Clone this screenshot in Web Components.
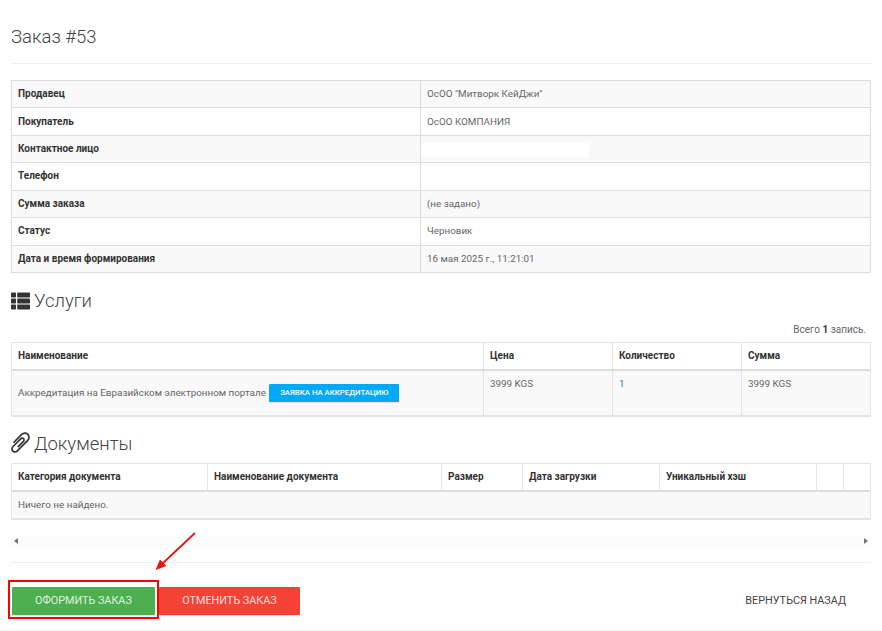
<!DOCTYPE html>
<html lang="ru">
<head>
<meta charset="utf-8">
<title>Заказ #53</title>
<style>
    html, body { margin: 0; background: #fff; }
    body { font: 9.85px Roboto, sans-serif; color: #666; }
</style>
</head>
<body>

<order-page>
    <page-title>Заказ #53</page-title>

    <detail-table>
        <detail-row label="Продавец">ОсОО "Митворк КейДжи"</detail-row>
        <detail-row label="Покупатель">ОсОО КОМПАНИЯ</detail-row>
        <detail-row label="Контактное лицо" hidden-value></detail-row>
        <detail-row label="Телефон"></detail-row>
        <detail-row label="Сумма заказа">(не задано)</detail-row>
        <detail-row label="Статус">Черновик</detail-row>
        <detail-row label="Дата и время формирования">16 мая 2025 г., 11:21:01</detail-row>
    </detail-table>

    <section-heading icon="list" style="--top: 16px; --bottom: 0">Услуги</section-heading>
    <grid-summary>Всего <b>1</b> запись.</grid-summary>
    <data-grid style="--cols: 471px 129px 129px 1fr">
        <grid-row head>
            <grid-cell>Наименование</grid-cell>
            <grid-cell>Цена</grid-cell>
            <grid-cell>Количество</grid-cell>
            <grid-cell>Сумма</grid-cell>
        </grid-row>
        <grid-row style="--row: 44px">
            <grid-cell middle>Аккредитация на Евразийском электронном портале <small-button>Заявка на аккредитацию</small-button></grid-cell>
            <grid-cell>3999 KGS</grid-cell>
            <grid-cell link>1</grid-cell>
            <grid-cell>3999 KGS</grid-cell>
        </grid-row>
    </data-grid>

    <section-heading icon="clip" style="--top: 15px; --bottom: 7px">Документы</section-heading>
    <data-grid style="--cols: 195px 234px 81px 137px 157px 27px 1fr">
        <grid-row head>
            <grid-cell>Категория документа</grid-cell>
            <grid-cell>Наименование документа</grid-cell>
            <grid-cell>Размер</grid-cell>
            <grid-cell>Дата загрузки</grid-cell>
            <grid-cell>Уникальный хэш</grid-cell>
            <grid-cell></grid-cell>
            <grid-cell></grid-cell>
        </grid-row>
        <grid-row style="--cols: 1fr">
            <grid-cell>Ничего не найдено.</grid-cell>
        </grid-row>
    </data-grid>

    <scroll-track></scroll-track>

    <action-bar>
        <action-button color="green" style="--pad: 23px">Оформить заказ</action-button>
        <action-button color="red" style="--pad: 23.5px">Отменить заказ</action-button>
        <action-button slot="end" style="margin-right: 1px">Вернуться назад</action-button>
    </action-bar>

    <call-out></call-out>
</order-page>

<script>
class OrderPage extends HTMLElement {
    constructor() {
        super()
        this.attachShadow({ mode: 'open' })
        this.shadowRoot.innerHTML = `
        <style>
            :host {
                display: block;
                position: relative;
                box-sizing: border-box;
                height: 631px;
                padding: 0 11px 0 11px;
                overflow: hidden;
                border-bottom: 1px solid #f2f2f2;
            }
        </style>
        <slot></slot>
        `
    }
}

class PageTitle extends HTMLElement {
    constructor() {
        super()
        this.attachShadow({ mode: 'open' })
        this.shadowRoot.innerHTML = `
        <style>
            :host {
                display: block;
                height: 64px;
                box-sizing: border-box;
                padding-top: 26px;
                border-bottom: 1px solid #eee;
                margin-bottom: 16px;
                font: 300 18.5px/22px Roboto, sans-serif;
                color: #444;
            }
        </style>
        <slot></slot>
        `
    }
}

class DetailTable extends HTMLElement {
    constructor() {
        super()
        this.attachShadow({ mode: 'open' })
        this.shadowRoot.innerHTML = `
        <style>
            :host {
                display: block;
                border: 1px solid #ddd;
                border-bottom: 0;
            }
        </style>
        <slot></slot>
        `
    }
}

class DetailRow extends HTMLElement {
    constructor() {
        super()
        this.attachShadow({ mode: 'open' })
        const label = this.getAttribute('label')
        const patch = this.hasAttribute('hidden-value') ? '<span class="patch"></span>' : ''
        this.shadowRoot.innerHTML = `
        <style>
            :host {
                display: grid;
                grid-template-columns: 408px 1fr;
                height: 27.43px;
                box-sizing: border-box;
                border-bottom: 1px solid #ddd;
            }
            :host(:nth-child(odd)) { background: #f9f9f9; }
            .label, .value {
                display: flex;
                align-items: center;
                padding: 0 6px 1px;
            }
            .label { font-weight: 700; font-size: 10px; color: #333; }
            .value { border-left: 1px solid #ddd; color: #666; position: relative; }
            .patch {
                position: absolute;
                left: 0;
                top: 7px;
                width: 168px;
                height: 15px;
                background: #fff;
            }
        </style>
        <div class="label">${label}</div>
        <div class="value">${patch}<slot></slot></div>
        `
    }
}

class SectionHeading extends HTMLElement {
    constructor() {
        super()
        this.attachShadow({ mode: 'open' })
        const icons = {
            list: `<svg width="19" height="18" viewBox="0 0 19 18" fill="#333">
                <rect x="0" y="0.5" width="5" height="5" rx="0.8"/><rect x="6.2" y="0.5" width="12.8" height="5" rx="0.8"/>
                <rect x="0" y="6.5" width="5" height="5" rx="0.8"/><rect x="6.2" y="6.5" width="12.8" height="5" rx="0.8"/>
                <rect x="0" y="12.5" width="5" height="5" rx="0.8"/><rect x="6.2" y="12.5" width="12.8" height="5" rx="0.8"/>
            </svg>`,
            clip: `<svg width="19" height="24" viewBox="0 0 1408 1792" fill="#333" style="transform: translateY(-1.5px) scaleX(-1)"><path d="M1404 1385q0 117-79 196t-196 79q-135 0-235-100l-777-776q-113-115-113-271 0-159 110-270t269-111q158 0 273 113l605 606q10 10 10 22 0 16-30.5 46.5t-46.5 30.5q-13 0-23-10l-606-607q-79-77-181-77-106 0-179 75t-73 181q0 105 76 181l776 777q63 63 145 63 64 0 106-42t42-106q0-82-63-145l-581-581q-26-24-60-24-29 0-48 19t-19 48q0 32 25 59l410 410q10 10 10 22 0 16-31 47t-47 31q-12 0-22-10l-410-410q-63-61-63-149 0-82 57-139t139-57q88 0 149 63l581 581q100 98 100 235z"/></svg>`
        }
        this.shadowRoot.innerHTML = `
        <style>
            :host {
                display: flex;
                align-items: center;
                gap: 4px;
                height: 24px;
                margin-top: var(--top, 16px);
                margin-bottom: var(--bottom, 0);
                font: 300 18.5px/24px Roboto, sans-serif;
                color: #444;
            }
            svg { flex: none; display: block; }
        </style>
        ${icons[this.getAttribute('icon')] || ''}
        <span><slot></slot></span>
        `
    }
}

class GridSummary extends HTMLElement {
    constructor() {
        super()
        this.attachShadow({ mode: 'open' })
        this.shadowRoot.innerHTML = `
        <style>
            :host {
                display: block;
                margin-top: 10px;
                height: 19px;
                padding-right: 5px;
                text-align: right;
                font-size: 10px;
                line-height: 14px;
                color: #666;
            }
            ::slotted(b) { color: #333; }
        </style>
        <slot></slot>
        `
    }
}

class DataGrid extends HTMLElement {
    constructor() {
        super()
        this.attachShadow({ mode: 'open' })
        this.shadowRoot.innerHTML = `
        <style>
            :host {
                display: block;
                border: 1px solid #e4e4e4;
                border-bottom-width: 2px;
            }
        </style>
        <slot></slot>
        `
    }
}

class GridRow extends HTMLElement {
    constructor() {
        super()
        this.attachShadow({ mode: 'open' })
        this.shadowRoot.innerHTML = `
        <style>
            :host {
                display: grid;
                grid-template-columns: var(--cols);
                min-height: var(--row, 26px);
                background: #f9f9f9;
            }
            :host([head]) {
                background: #fff;
                font-weight: 700;
                font-size: 10px;
                color: #333;
                border-bottom: 2px solid #ddd;
            }
        </style>
        <slot></slot>
        `
    }
}

class GridCell extends HTMLElement {
    constructor() {
        super()
        this.attachShadow({ mode: 'open' })
        this.shadowRoot.innerHTML = `
        <style>
            :host {
                display: block;
                box-sizing: border-box;
                padding: 6px;
                line-height: 14px;
                border-left: 1px solid #e4e4e4;
            }
            :host(:first-child) { border-left: 0; }
            :host([middle]) { padding-top: 13px; }
            :host([link]) { color: #3c7a9c; }
        </style>
        <slot></slot>
        `
    }
}

class SmallButton extends HTMLElement {
    constructor() {
        super()
        this.attachShadow({ mode: 'open' })
        this.shadowRoot.innerHTML = `
        <style>
            :host {
                display: inline-block;
                vertical-align: middle;
                box-sizing: border-box;
                height: 18px;
                width: 130px;
                margin-left: 1px;
                background: #03a9f4;
                border-radius: 1px;
                color: #fff;
                font-size: 7.8px;
                font-weight: 500;
                line-height: 18px;
                text-align: center;
                text-transform: uppercase;
                box-shadow: 0 1px 1px rgba(0,0,0,.1);
            }
        </style>
        <slot></slot>
        `
    }
}

class ScrollTrack extends HTMLElement {
    constructor() {
        super()
        this.attachShadow({ mode: 'open' })
        this.shadowRoot.innerHTML = `
        <style>
            :host {
                display: flex;
                justify-content: space-between;
                align-items: center;
                height: 11px;
                margin-top: 16px;
                padding: 0 3px;
                background: #fcfcfc;
            }
            i { width: 0; height: 0; border: 3.5px solid transparent; }
            .l { border-left: 0; border-right: 4px solid #757575; }
            .r { border-right: 0; border-left: 4px solid #757575; }
        </style>
        <i class="l"></i><i class="r"></i>
        `
    }
}

class ActionBar extends HTMLElement {
    constructor() {
        super()
        this.attachShadow({ mode: 'open' })
        this.shadowRoot.innerHTML = `
        <style>
            :host {
                display: flex;
                justify-content: space-between;
                margin-top: 15px;
                padding: 24px 0 0 1px;
                border-top: 1px solid #eee;
            }
            .start { display: flex; gap: 4px; }
        </style>
        <div class="start"><slot></slot></div>
        <slot name="end"></slot>
        `
    }
}

class ActionButton extends HTMLElement {
    constructor() {
        super()
        this.attachShadow({ mode: 'open' })
        const colors = { green: '#4caf50', red: '#f44336' }
        const color = colors[this.getAttribute('color')]
        this.shadowRoot.innerHTML = `
        <style>
            :host {
                display: block;
                box-sizing: border-box;
                height: 28px;
                padding: 0 var(--pad, 24px);
                background: ${color || 'transparent'};
                color: ${color ? 'rgba(255,255,255,.85)' : '#444'};
                border-radius: 1px;
                font-size: 10.8px;
                line-height: 28px;
                text-transform: uppercase;
                white-space: nowrap;
                ${color ? 'box-shadow: 0 1px 1px rgba(0,0,0,.12);' : ''}
            }
        </style>
        <slot></slot>
        `
    }
}

class CallOut extends HTMLElement {
    constructor() {
        super()
        this.attachShadow({ mode: 'open' })
        this.shadowRoot.innerHTML = `
        <style>
            :host { position: absolute; left: 0; top: 0; width: 882px; height: 631px; pointer-events: none; }
            svg { display: block; }
        </style>
        <svg width="882" height="631" viewBox="0 0 882 631">
            <rect x="9" y="581" width="149" height="37" fill="none" stroke="#f00" stroke-width="2"/>
            <path d="M195 533 L163 563" stroke="#e8140f" stroke-width="1.8" fill="none"/>
            <path d="M155.5 570 L160 559.5 L166.5 566 Z" fill="#e8140f"/>
        </svg>
        `
    }
}

customElements.define('order-page', OrderPage)
customElements.define('page-title', PageTitle)
customElements.define('detail-table', DetailTable)
customElements.define('detail-row', DetailRow)
customElements.define('section-heading', SectionHeading)
customElements.define('grid-summary', GridSummary)
customElements.define('data-grid', DataGrid)
customElements.define('grid-row', GridRow)
customElements.define('grid-cell', GridCell)
customElements.define('small-button', SmallButton)
customElements.define('scroll-track', ScrollTrack)
customElements.define('action-bar', ActionBar)
customElements.define('action-button', ActionButton)
customElements.define('call-out', CallOut)
</script>
</body>
</html>
